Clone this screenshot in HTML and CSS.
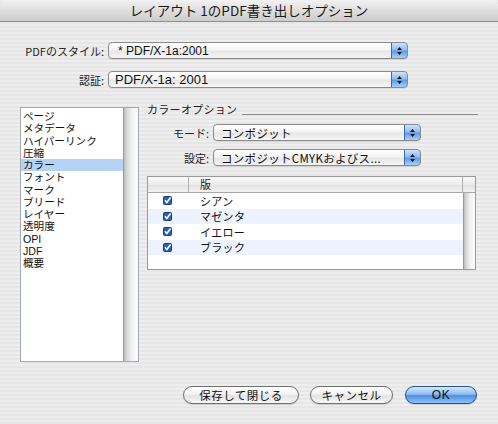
FILE: index.html
```html
<!DOCTYPE html>
<html lang="ja">
<head>
<meta charset="utf-8">
<link rel="stylesheet" href="styles.css">
</head>
<body>
<div class="window">
  <div class="titlebar">レイアウト 1のPDF書き出しオプション</div>
  <div class="top-rows">
    <div class="form-row">
      <span class="label">PDFのスタイル:</span>
      <div class="popup wide"><span class="ptext">* PDF/X-1a:2001</span><span class="stepper"><svg width="7" height="10" viewBox="0 0 7 10"><path d="M3.5 1 L6 4 L1 4 Z M3.5 9 L6 6 L1 6 Z" fill="#1a1a1a"/></svg></span></div>
    </div>
    <div class="form-row second">
      <span class="label">認証:</span>
      <div class="popup wide"><span class="ptext big">PDF/X-1a: 2001</span><span class="stepper"><svg width="7" height="10" viewBox="0 0 7 10"><path d="M3.5 1 L6 4 L1 4 Z M3.5 9 L6 6 L1 6 Z" fill="#1a1a1a"/></svg></span></div>
    </div>
  </div>
  <div class="main">
    <div class="listbox">
      <ul class="items">
        <li>ページ</li>
        <li>メタデータ</li>
        <li>ハイパーリンク</li>
        <li>圧縮</li>
        <li class="sel">カラー</li>
        <li>フォント</li>
        <li>マーク</li>
        <li>ブリード</li>
        <li>レイヤー</li>
        <li>透明度</li>
        <li>OPI</li>
        <li>JDF</li>
        <li>概要</li>
      </ul>
      <div class="vscroll"></div>
    </div>
    <div class="panel">
      <div class="group-head"><span class="group-title">カラーオプション</span><span class="group-line"></span></div>
      <div class="prow">
        <span class="plabel">モード:</span>
        <div class="popup mid"><span class="ptext jp">コンポジット</span><span class="stepper"><svg width="7" height="10" viewBox="0 0 7 10"><path d="M3.5 1 L6 4 L1 4 Z M3.5 9 L6 6 L1 6 Z" fill="#1a1a1a"/></svg></span></div>
      </div>
      <div class="prow settings">
        <span class="plabel">設定:</span>
        <div class="popup mid"><span class="ptext jp">コンポジットCMYKおよびス...</span><span class="stepper"><svg width="7" height="10" viewBox="0 0 7 10"><path d="M3.5 1 L6 4 L1 4 Z M3.5 9 L6 6 L1 6 Z" fill="#1a1a1a"/></svg></span></div>
      </div>
      <div class="table">
        <div class="thead">
          <span class="th-check"></span>
          <span class="th-name">版</span>
          <span class="th-corner"></span>
        </div>
        <div class="tbody">
          <div class="rows">
            <div class="row"><span class="cb"><svg width="9" height="9" viewBox="0 0 9 9"><rect x="0.5" y="0.5" width="8" height="8" rx="1" fill="#2f5fb0" stroke="#1c3d7a"/><path d="M2 4.3 L3.8 6.4 L7.6 1.4" stroke="#fff" stroke-width="1.6" fill="none"/></svg></span><span class="name">シアン</span></div>
            <div class="row alt"><span class="cb"><svg width="9" height="9" viewBox="0 0 9 9"><rect x="0.5" y="0.5" width="8" height="8" rx="1" fill="#2f5fb0" stroke="#1c3d7a"/><path d="M2 4.3 L3.8 6.4 L7.6 1.4" stroke="#fff" stroke-width="1.6" fill="none"/></svg></span><span class="name">マゼンタ</span></div>
            <div class="row"><span class="cb"><svg width="9" height="9" viewBox="0 0 9 9"><rect x="0.5" y="0.5" width="8" height="8" rx="1" fill="#2f5fb0" stroke="#1c3d7a"/><path d="M2 4.3 L3.8 6.4 L7.6 1.4" stroke="#fff" stroke-width="1.6" fill="none"/></svg></span><span class="name">イエロー</span></div>
            <div class="row alt"><span class="cb"><svg width="9" height="9" viewBox="0 0 9 9"><rect x="0.5" y="0.5" width="8" height="8" rx="1" fill="#2f5fb0" stroke="#1c3d7a"/><path d="M2 4.3 L3.8 6.4 L7.6 1.4" stroke="#fff" stroke-width="1.6" fill="none"/></svg></span><span class="name">ブラック</span></div>
          </div>
          <div class="vscroll small"></div>
        </div>
      </div>
    </div>
  </div>
  <div class="buttons">
    <button class="btn save">保存して閉じる</button>
    <button class="btn cancel">キャンセル</button>
    <button class="btn ok">OK</button>
  </div>
</div>
</body>
</html>
```

FILE: styles.css
```css
html, body {
  margin: 0;
  padding: 0;
}
body {
  width: 498px;
  height: 424px;
  overflow: hidden;
  font-family: "Liberation Sans", "Noto Sans CJK JP", sans-serif;
  color: #000;
}
.window {
  width: 498px;
  height: 424px;
  box-sizing: border-box;
  background: repeating-linear-gradient(to bottom, #eeeeee 0px, #eeeeee 2px, #e6e6e6 2px, #e6e6e6 4px);
  display: flex;
  flex-direction: column;
}
.titlebar {
  height: 21px;
  border-bottom: 1px solid #8e8e8e;
  border-radius: 6px 6px 0 0;
  background: linear-gradient(to bottom, #f2f2f2, #dedede 50%, #cdcdcd);
  text-align: center;
  font-family: "Noto Sans CJK JP", sans-serif;
  font-size: 13.5px;
  line-height: 21px;
  color: #1a1a1a;
}
.top-rows {
  margin-top: 20px;
  display: flex;
  flex-direction: column;
  gap: 12px;
}
.form-row {
  display: flex;
  align-items: center;
  height: 17px;
}
.label {
  width: 104px;
  text-align: right;
  font-family: "Noto Sans CJK JP", sans-serif;
  font-size: 11px;
  color: #222;
  padding-right: 4px;
  box-sizing: content-box;
}
.popup {
  height: 17px;
  box-sizing: border-box;
  border: 1px solid #8a8a8a;
  border-radius: 4px;
  background: linear-gradient(to bottom, #ffffff, #f4f4f4 45%, #e6e6e6 55%, #f6f6f6);
  display: flex;
  align-items: center;
  overflow: hidden;
  box-shadow: 0 1px 0 rgba(0,0,0,0.08);
}
.popup.wide {
  width: 300px;
}
.popup.mid {
  width: 208px;
}
.ptext {
  flex: 1;
  padding-left: 9px;
  font-size: 12px;
  white-space: nowrap;
  color: #111;
}
.ptext.big {
  padding-left: 6px;
  font-size: 13px;
}
.ptext.jp {
  font-family: "Noto Sans CJK JP", sans-serif;
  font-size: 11.5px;
  padding-left: 7px;
  letter-spacing: 0.3px;
}
.stepper {
  width: 17px;
  height: 17px;
  margin-top: -1px;
  margin-bottom: -1px;
  margin-right: -1px;
  border-radius: 0 4px 4px 0;
  border: 1px solid #3d6aa8;
  box-sizing: border-box;
  background: linear-gradient(to bottom, #cfe3fb, #8fbcf0 45%, #5f9ae6 55%, #a9d0fb);
  display: flex;
  align-items: center;
  justify-content: center;
}
.main {
  margin-top: 15px;
  display: flex;
  height: 259px;
}
.listbox {
  margin-left: 20px;
  margin-top: 4px;
  width: 119px;
  height: 255px;
  box-sizing: border-box;
  border: 1px solid #a4abb6;
  background: #fff;
  display: flex;
}
.items {
  list-style: none;
  margin: 0;
  padding: 2px 0 0 0;
  flex: 1;
  font-family: "Liberation Sans", "Noto Sans CJK JP", sans-serif;
  font-size: 10.6px;
  line-height: 12.25px;
  color: #111;
}
.items li {
  padding-left: 2px;
  height: 12.25px;
  white-space: nowrap;
  overflow: visible;
}
.items li.sel {
  background: #b5d3f5;
}
.vscroll {
  width: 15px;
  height: 100%;
  box-sizing: border-box;
  border-left: 1px solid #9a9a9a;
  background: linear-gradient(to right, #bdbdbd, #dcdcdc 25%, #f4f4f4 60%, #fbfbfb);
}
.vscroll.small {
  width: 12px;
}
.panel {
  margin-left: 8px;
  width: 331px;
  display: flex;
  flex-direction: column;
}
.group-head {
  display: flex;
  align-items: flex-end;
  height: 13px;
}
.group-title {
  font-family: "Noto Sans CJK JP", sans-serif;
  font-size: 11px;
  line-height: 13px;
  color: #222;
  letter-spacing: 0.3px;
}
.group-line {
  flex: 1;
  margin-left: 5px;
  border-bottom: 1px solid #8c8c8c;
  margin-bottom: 1px;
}
.prow {
  display: flex;
  align-items: center;
  height: 17px;
  margin-top: 8px;
}
.plabel {
  width: 62px;
  padding-right: 4px;
  text-align: right;
  font-family: "Noto Sans CJK JP", sans-serif;
  font-size: 11px;
  color: #222;
}
.table {
  margin-top: 10px;
  width: 329px;
  height: 94px;
  box-sizing: border-box;
  border: 1px solid #9a9a9a;
  background: #fff;
  display: flex;
  flex-direction: column;
}
.thead {
  height: 16px;
  box-sizing: border-box;
  border-bottom: 1px solid #a8a8a8;
  background: linear-gradient(to bottom, #fafafa, #ececec 50%, #e2e2e2 52%, #f2f2f2);
  display: flex;
  font-family: "Noto Sans CJK JP", sans-serif;
  font-size: 11px;
  line-height: 15px;
}
.th-check {
  width: 40px;
  border-right: 1px solid #b0b0b0;
}
.th-name {
  flex: 1;
  padding-left: 11px;
  color: #222;
}
.th-corner {
  width: 12px;
  border-left: 1px solid #b0b0b0;
}
.tbody {
  flex: 1;
  display: flex;
}
.rows {
  flex: 1;
}
.row {
  height: 15.5px;
  display: flex;
  align-items: center;
  font-family: "Noto Sans CJK JP", sans-serif;
  font-size: 11px;
  color: #111;
  letter-spacing: 0.3px;
}
.row.alt {
  background: #edf3fe;
}
.cb {
  width: 16px;
  margin-left: 15px;
  display: flex;
  align-items: center;
}
.cb svg {
  display: block;
}
.name {
  margin-left: 21px;
}
.buttons {
  margin-top: 24px;
  display: flex;
  padding-left: 183px;
  gap: 11px;
}
.btn {
  height: 18px;
  box-sizing: border-box;
  border: 1px solid #707070;
  border-radius: 9px;
  background: linear-gradient(to bottom, #ffffff, #f2f2f2 45%, #e2e2e2 55%, #f8f8f8);
  font-family: "Noto Sans CJK JP", sans-serif;
  font-size: 11.5px;
  line-height: 15px;
  padding: 0;
  color: #111;
  letter-spacing: 0.5px;
  box-shadow: 0 1px 1px rgba(0,0,0,0.15);
}
.btn.save {
  width: 116px;
}
.btn.cancel {
  width: 83px;
}
.btn.ok {
  width: 72px;
  margin-left: 1px;
  border-color: #27508c;
  background: linear-gradient(to bottom, #d6e8fc, #8cbcf2 45%, #4f8fe0 55%, #8cc4fa);
  font-family: "Liberation Sans", sans-serif;
  font-size: 12px;
}
```
